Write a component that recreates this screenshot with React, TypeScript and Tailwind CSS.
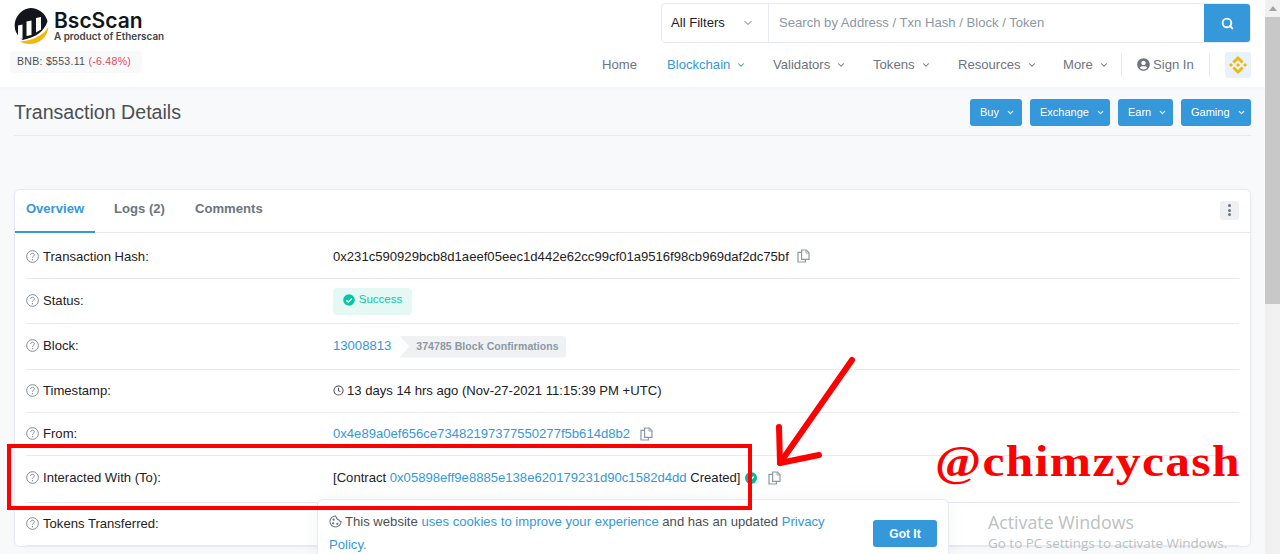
import type { ReactNode } from 'react';
import { ChevronDown, Search } from 'lucide-react';
import { FaUserCircle } from 'react-icons/fa';

const font = { fontFamily: '"Liberation Sans", Arial, sans-serif' };

function Help() {
  return (
    <svg viewBox="0 0 14 14" className="w-[13px] h-[13px] shrink-0 text-[#77838f]" fill="none" stroke="currentColor">
      <circle cx="7" cy="7" r="6.3" strokeWidth="1" />
      <path d="M5 5.400c0-1.100.9-1.900 2-1.900s2 .8 2 1.800c0 1.500-2 1.400-2 3" strokeWidth="1" />
      <circle cx="7" cy="10.400" r=".7" fill="currentColor" stroke="none" />
    </svg>
  );
}

function Copy() {
  return (
    <svg viewBox="0 0 13 14" className="w-[13px] h-[14px] shrink-0 text-[#8c98a4]" fill="none" stroke="currentColor" strokeWidth="1.200">
      <path d="M4.600 1h4.700L12 3.700V10.400H4.600z" fill="#fff" />
      <path d="M9 1v3h3" strokeWidth=".8" />
      <path d="M4.600 3.400H1V13h7.400V10.400" />
    </svg>
  );
}

function Row({ label, children, h, last }: { label: string; children: ReactNode; h: string; last?: boolean }) {
  return (
    <div className={`flex items-center ${h} ${last ? '' : 'border-b border-[#e7eaf3]'}`}>
      <div className="w-[307px] flex items-center gap-[4px] text-[#1e2022]">
        <Help />
        <span>{label}</span>
      </div>
      <div className="flex items-center text-[#1e2022]">{children}</div>
    </div>
  );
}

function NavItem({ label, active, w }: { label: string; active?: boolean; w: string }) {
  return (
    <div className={`flex items-center gap-[6px] ${w} ${active ? 'text-[#3498db]' : 'text-[#6c757e]'}`}>
      <span>{label}</span>
      <ChevronDown size={10} strokeWidth={2.5} />
    </div>
  );
}

function BlueBtn({ label, w }: { label: string; w: string }) {
  return (
    <div className={`h-[27px] ${w} bg-[#3498db] rounded-[3px] text-white text-[11px] flex items-center pl-[10px] gap-[7px]`}>
      <span>{label}</span>
      <ChevronDown size={9} strokeWidth={3} />
    </div>
  );
}

export default function App() {
  return (
    <div style={font} className="relative w-[1280px] h-[554px] overflow-hidden flex text-[13.100px] bg-[#f8f9fa]">
      <div className="w-[1265px] shrink-0">
        {/* header */}
        <header className="h-[87px] bg-white flex justify-between pl-[10px] pr-[14px] shadow-[0_1px_6px_rgba(0,0,0,0.03)]">
          <div className="pt-[8px]">
            <div className="flex items-center gap-[5px] pl-[3px]">
              <svg viewBox="0 0 36 36" className="w-[36px] h-[36px]">
                <path d="M17.500 0a17.500 17.500 0 0 1 17 13.500c-3 9-11 16-25 18.500A17.500 17.500 0 0 1 17.500 0z" fill="#12161c" />
                <path d="M35.500 19c-1 10-9 17-19 17-4 0-7-1-9.500-2.500 13-1 23-6 28.500-14.500z" fill="#f0b90b" />
                <path d="M5 30V17.500l4.500-1V31zM13.500 28V13.500l5-1V27zM23 24.500V10l5-1v12.500z" fill="#fff" />
              </svg>
              <div className="leading-none">
                <div style={{ fontFamily: 'Inter, sans-serif' }} className="text-[21px] font-semibold text-[#12161c] leading-[21px]">BscScan</div>
                <div style={{ fontFamily: 'Inter, sans-serif' }} className="text-[9.900px] font-semibold text-[#3f4448] mt-[1px]">A product of Etherscan</div>
              </div>
            </div>
            <div className="mt-[7px] h-[22px] w-[132px] bg-[#f8f9fa] rounded-[4px] flex items-center pl-[7px] text-[10.500px] tracking-[0.3px] text-[#4a4f55] whitespace-nowrap">
              BNB: $553.11&nbsp;<span className="text-[#e0485a]">(-6.48%)</span>
            </div>
          </div>
          <div className="flex flex-col items-end">
            <div className="mt-[3px] h-[40px] w-[590px] flex border border-[#e7eaf3] rounded-[4px] overflow-hidden">
              <div className="w-[107px] border-r border-[#e7eaf3] flex items-center justify-between pl-[9px] pr-[14px] text-[#1e2022]">
                <span>All Filters</span>
                <ChevronDown size={12} className="text-[#6c757e]" />
              </div>
              <div className="flex-1 flex items-center pl-[10px] text-[#8c98a4]">Search by Address / Txn Hash / Block / Token</div>
              <div className="w-[46px] bg-[#3498db] flex items-center justify-center">
                <Search size={13} strokeWidth={3.500} className="text-white" />
              </div>
            </div>
            <nav className="mt-[8px] h-[28px] flex items-center">
              <span className="text-[#6c757e] w-[65px]">Home</span>
              <NavItem label="Blockchain" active w="w-[106px]" />
              <NavItem label="Validators" w="w-[100px]" />
              <NavItem label="Tokens" w="w-[85px]" />
              <NavItem label="Resources" w="w-[105px]" />
              <NavItem label="More" w="w-[58px]" />
              <div className="w-px h-[24px] bg-[#e7eaf3]" />
              <div className="flex items-center gap-[3px] text-[#6c757e] w-[87px] pl-[15px]">
                <FaUserCircle size={13} />
                <span>Sign In</span>
              </div>
              <div className="w-px h-[24px] bg-[#e7eaf3] mr-[15px]" />
              <div className="w-[26px] h-[26px] bg-[#e8f2fa] rounded-[3px] flex items-center justify-center">
                <svg viewBox="5 5 22 22" className="w-[20px] h-[20px]" fill="#f0b90b">
                  <path d="M12.116 14.404L16 10.520l3.886 3.886 2.260-2.260L16 6l-6.144 6.144 2.260 2.260zM6 16l2.260-2.260L10.520 16l-2.260 2.260L6 16zm6.116 1.596L16 21.480l3.886-3.886 2.260 2.259L16 26l-6.144-6.144-.003-.003 2.263-2.257zM21.480 16l2.260-2.260L26 16l-2.260 2.260L21.480 16zm-3.188-.002h.002V16L16 18.294l-2.291-2.290-.004-.004.004-.003.401-.402.195-.195L16 13.706l2.293 2.293z" />
                </svg>
              </div>
            </nav>
          </div>
        </header>

        {/* title bar */}
        <div className="mx-[14px] h-[49px] flex items-center justify-between border-b border-[#e7eaf3]">
          <h1 className="text-[19.600px] text-[#4a4f55] pt-[4px]">Transaction Details</h1>
          <div className="flex gap-[8px] pt-[2px]">
            <BlueBtn label="Buy" w="w-[52px]" />
            <BlueBtn label="Exchange" w="w-[80px]" />
            <BlueBtn label="Earn" w="w-[55px]" />
            <BlueBtn label="Gaming" w="w-[70px]" />
          </div>
        </div>

        {/* card */}
        <div className="mx-[14px] mt-[53px] bg-white border border-[#e7eaf3] rounded-[6px] shadow-[0_0_4px_rgba(0,0,0,0.03)]">
          <div className="h-[43px] flex items-center justify-between border-b border-[#e7eaf3] pr-[11px]">
            <div className="flex h-full font-bold text-[13.100px]">
              <div className="w-[80px] flex items-center justify-center pb-[4px] text-[#3498db] border-b-2 border-[#3498db] h-[43px]">Overview</div>
              <div className="ml-[19px] w-[52px] flex items-center pb-[4px] text-[#6c757e]">Logs (2)</div>
              <div className="ml-[29px] flex items-center pb-[4px] text-[#6c757e]">Comments</div>
            </div>
            <div className="w-[19px] h-[19px] -mt-[2px] rounded-[3px] bg-[#eff0f3] flex flex-col items-center justify-center gap-[1.500px]">
              <span className="w-[3px] h-[3px] rounded-full bg-[#6c757e]" />
              <span className="w-[3px] h-[3px] rounded-full bg-[#6c757e]" />
              <span className="w-[3px] h-[3px] rounded-full bg-[#6c757e]" />
            </div>
          </div>
          <div className="px-[11px]">
            <Row label="Transaction Hash:" h="h-[46px] pt-[2px]">
              <span>0x231c590929bcb8d1aeef05eec1d442e62cc99cf01a9516f98cb969daf2dc75bf</span>
              <span className="ml-[8px]"><Copy /></span>
            </Row>
            <Row label="Status:" h="h-[45px]">
              <div className="h-[27px] w-[79px] bg-[#e6f8f3] rounded-[4px] flex items-center justify-center gap-[4px] pb-[2px] text-[#00c9a7] text-[11.500px]">
                <svg viewBox="0 0 12 12" className="w-[12px] h-[12px]">
                  <circle cx="6" cy="6" r="5.800" fill="#00c9a7" />
                  <path d="M3.300 6.200l2 2 3.500-3.700" fill="none" stroke="#fff" strokeWidth="1.500" />
                </svg>
                Success
              </div>
            </Row>
            <Row label="Block:" h="h-[46px] pb-[2px]">
              <span className="text-[#3498db]">13008813</span>
              <div className="ml-[8px] mt-[2px] h-[22px] w-[167px] bg-[#f0f1f3] rounded-r-[3px] [clip-path:polygon(0_0,100%_0,100%_100%,0_100%,10px_50%)] flex items-center pl-[17px] text-[10.500px] font-bold tracking-[0.07px] text-[#8c98a4]">
                374785 Block Confirmations
              </div>
            </Row>
            <Row label="Timestamp:" h="h-[43px]">
              <svg viewBox="0 0 12 12" className="w-[11px] h-[11px] mr-[3px] text-[#4a4f55]" fill="none" stroke="currentColor" strokeWidth="1.100">
                <circle cx="6" cy="6" r="5" />
                <path d="M6 3v3.200l2 1" />
              </svg>
              <span>13 days 14 hrs ago (Nov-27-2021 11:15:39 PM +UTC)</span>
            </Row>
            <Row label="From:" h="h-[43px]">
              <span className="text-[#3498db]">0x4e89a0ef656ce73482197377550277f5b614d8b2</span>
              <span className="ml-[10px]"><Copy /></span>
            </Row>
            <Row label="Interacted With (To):" h="h-[47px] pb-[2px]">
              <span>[Contract&nbsp;</span>
              <span className="text-[#3498db]">0x05898eff9e8885e138e620179231d90c1582d4dd</span>
              <span>&nbsp;Created]</span>
              <svg viewBox="0 0 12 12" className="w-[12px] h-[12px] ml-[5px]">
                <circle cx="6" cy="6" r="6" fill="#00b89c" />
                <path d="M3.300 6.200l2 2 3.500-3.700" fill="none" stroke="#fff" strokeWidth="1.500" />
              </svg>
              <span className="ml-[11px]"><Copy /></span>
            </Row>
            <Row label="Tokens Transferred:" h="h-[43px]"><span /></Row>
          </div>
        </div>
      </div>

      {/* scrollbar */}
      <div className="w-[15px] shrink-0 bg-[#f1f1f1] flex flex-col">
        <div className="h-[17px] flex items-center justify-center">
          <svg viewBox="0 0 8 5" className="w-[8px] h-[5px]"><path d="M0 5l4-5 4 5z" fill="#a3a3a3" /></svg>
        </div>
        <div className="h-[287px] bg-[#c8c8c8]" />
      </div>

      {/* cookie notice */}
      <div className="absolute left-[317px] top-[499px] w-[632px] h-[70px] bg-white border border-[#e7eaf3] rounded-[6px] shadow-[0_0_16px_rgba(151,164,175,0.12)] px-[11px] pt-[10px] flex justify-between">
        <div className="leading-[23px] text-[#4a4f55] whitespace-nowrap">
          <div>
            <svg viewBox="0 0 14 14" className="inline w-[13px] h-[13px] mr-[3px] -mt-[2px] text-[#6c757e]" fill="none" stroke="currentColor" strokeWidth="1.100">
              <path d="M7 1a6 6 0 1 0 6 6 2.500 2.500 0 0 1-2.500-2A2.500 2.500 0 0 1 8 2.500 2 2 0 0 1 7 1z" />
              <circle cx="5" cy="5" r=".7" fill="currentColor" />
              <circle cx="4.500" cy="9" r=".7" fill="currentColor" />
              <circle cx="9" cy="9.500" r=".7" fill="currentColor" />
            </svg>
            This website <span className="text-[#3498db]">uses cookies to improve your experience</span> and has an updated <span className="text-[#3498db]">Privacy</span>
          </div>
          <div className="text-[#3498db]">Policy.</div>
        </div>
        <div className="mt-[10px] w-[64px] h-[27px] bg-[#3498db] rounded-[3px] text-white text-[12px] font-bold flex items-center justify-center">Got It</div>
      </div>

      {/* Activate Windows watermark */}
      <div style={{ fontFamily: '"Open Sans", sans-serif' }} className="absolute left-[988px] top-[510px] text-[#bcbfc2] pointer-events-none">
        <div className="text-[17.800px] leading-[24px]">Activate Windows</div>
        <div className="text-[13.450px] leading-[19px] whitespace-nowrap">Go to PC settings to activate Windows.</div>
      </div>

      {/* red annotations */}
      <div className="absolute left-[7px] top-[444px] w-[745px] h-[66px] border-[4px] border-[#f00] pointer-events-none" />
      <svg className="absolute left-[760px] top-[350px] w-[110px] h-[130px] pointer-events-none" viewBox="0 0 110 130" fill="none" stroke="#f00" strokeWidth="6" strokeLinecap="round" strokeLinejoin="round">
        <path d="M92 10L20 113" />
        <path d="M19 77L20 113L59 105" />
      </svg>
      <div style={{ fontFamily: '"Liberation Serif", serif' }} className="absolute left-[935px] top-[436px] origin-left scale-x-[1.126] text-[#f00] text-[44px] font-bold tracking-[1.200px] leading-[52px] whitespace-nowrap">@chimzycash</div>
    </div>
  );
}
